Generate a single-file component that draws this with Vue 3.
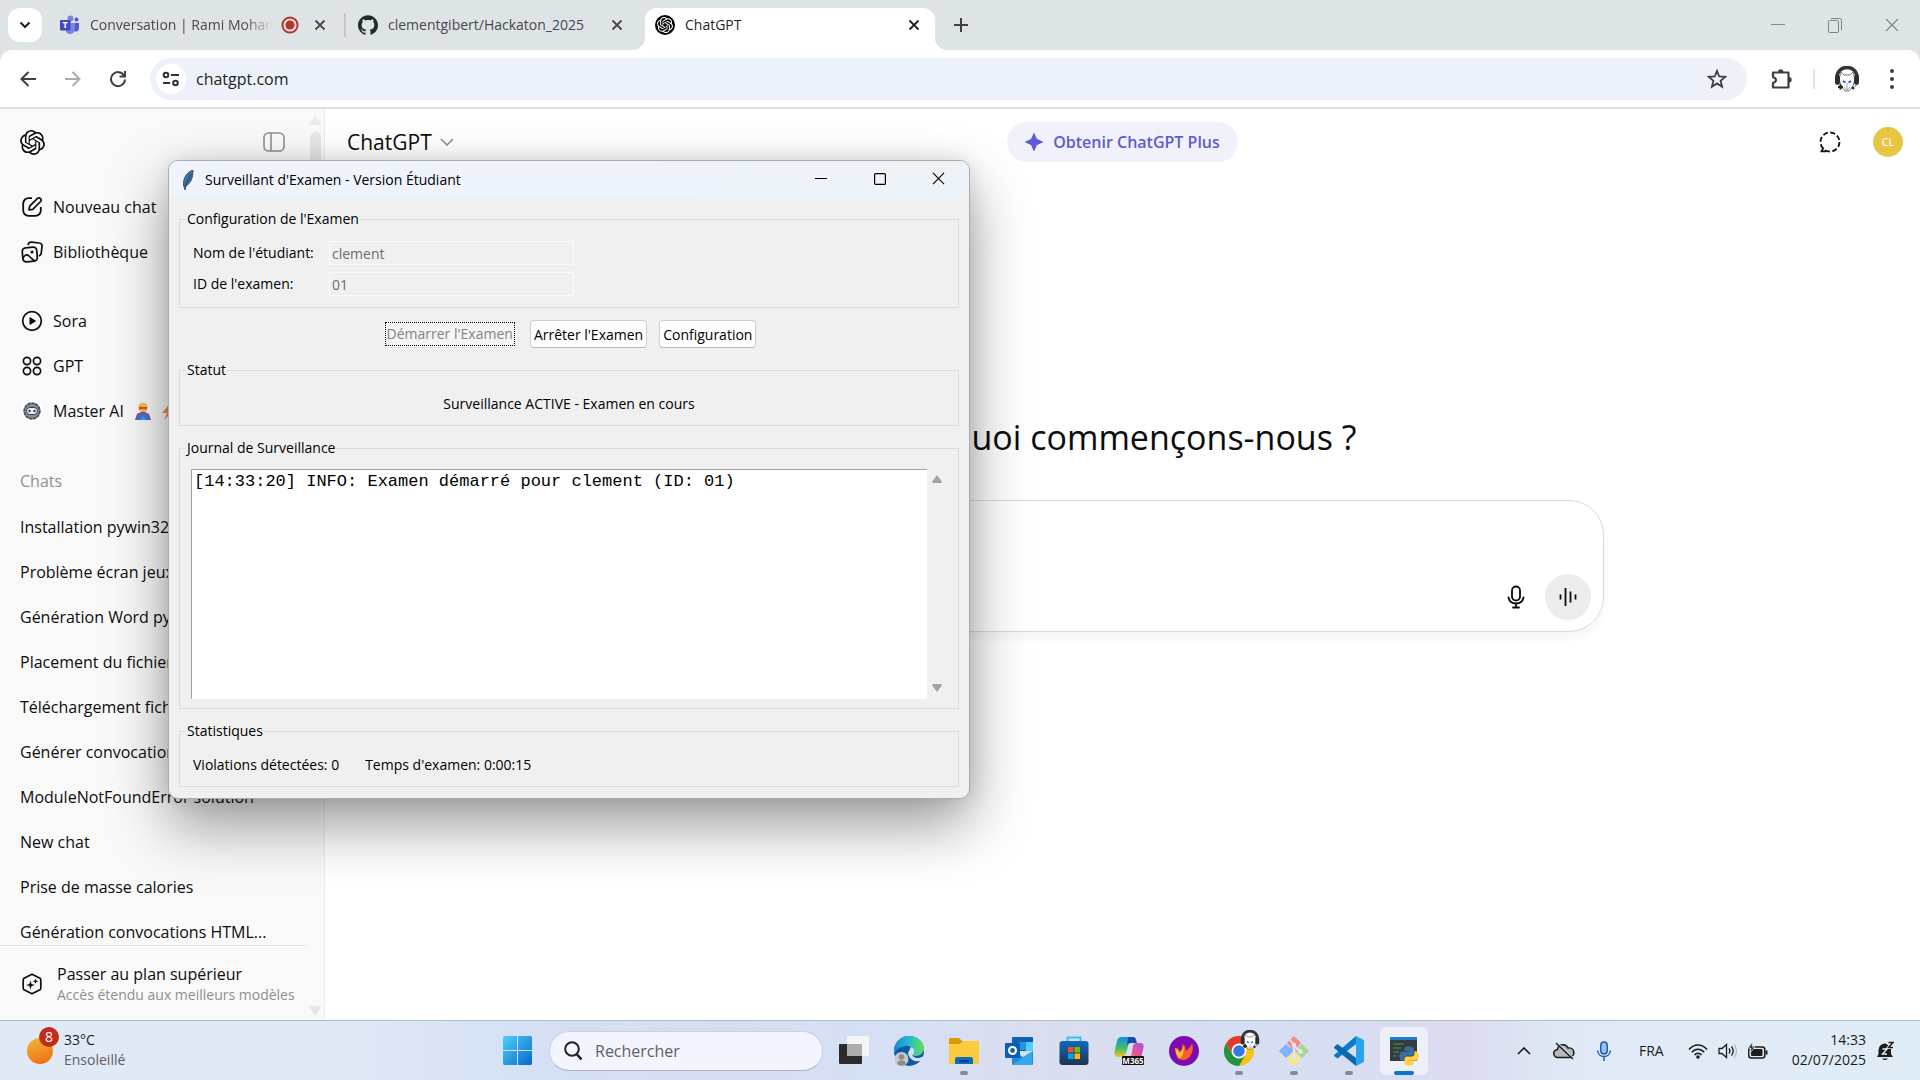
<script setup>
import { ref } from 'vue'

const chats = [
  'Installation pywin32',
  'Problème écran jeux',
  'Génération Word python',
  'Placement du fichier',
  'Téléchargement fichier',
  'Générer convocations',
  'ModuleNotFoundError solution',
  'New chat',
  'Prise de masse calories',
  'Génération convocations HTML...'
]
const student = ref('clement')
const examId = ref('01')
const log = ref('[14:33:20] INFO: Examen démarré pour clement (ID: 01)')
const address = ref('chatgpt.com')
const prompt = ref('')
const search = ref('')
</script>

<template>
  <div class="screen">
    <svg class="defs" aria-hidden="true">
      <defs>
        <symbol id="openai" viewBox="0 0 24 24">
          <path d="M22.2819 9.8211a5.9847 5.9847 0 0 0-.5157-4.9108 6.0462 6.0462 0 0 0-6.5098-2.9A6.0651 6.0651 0 0 0 4.9807 4.1818a5.9847 5.9847 0 0 0-3.9977 2.9 6.0462 6.0462 0 0 0 .7427 7.0966 5.98 5.98 0 0 0 .511 4.9107 6.051 6.051 0 0 0 6.5146 2.9001A5.9847 5.9847 0 0 0 13.2599 24a6.0557 6.0557 0 0 0 5.7718-4.2058 5.9894 5.9894 0 0 0 3.9977-2.9001 6.0557 6.0557 0 0 0-.7475-7.0729zm-9.022 12.6081a4.4755 4.4755 0 0 1-2.8764-1.0408l.1419-.0804 4.7783-2.7582a.7948.7948 0 0 0 .3927-.6813v-6.7369l2.02 1.1686a.071.071 0 0 1 .038.052v5.5826a4.504 4.504 0 0 1-4.4945 4.4944zm-9.6607-4.1254a4.4708 4.4708 0 0 1-.5346-3.0137l.142.0852 4.783 2.7582a.7712.7712 0 0 0 .7806 0l5.8428-3.3685v2.3324a.0804.0804 0 0 1-.0332.0615L9.74 19.9502a4.4992 4.4992 0 0 1-6.1408-1.6464zM2.3408 7.8956a4.485 4.485 0 0 1 2.3655-1.9728V11.6a.7664.7664 0 0 0 .3879.6765l5.8144 3.3543-2.0201 1.1685a.0757.0757 0 0 1-.071 0l-4.8303-2.7865A4.504 4.504 0 0 1 2.3408 7.872zm16.5963 3.8558L13.1038 8.364 15.1192 7.2a.0757.0757 0 0 1 .071 0l4.8303 2.7913a4.4944 4.4944 0 0 1-.6765 8.1042v-5.6772a.79.79 0 0 0-.407-.667zm2.0107-3.0231l-.142-.0852-4.7735-2.7818a.7759.7759 0 0 0-.7854 0L9.409 9.2297V6.8974a.0662.0662 0 0 1 .0284-.0615l4.8303-2.7866a4.4992 4.4992 0 0 1 6.6802 4.66zM8.3065 12.863l-2.02-1.1638a.0804.0804 0 0 1-.038-.0567V6.0742a4.4992 4.4992 0 0 1 7.3757-3.4537l-.142.0805L8.704 5.459a.7948.7948 0 0 0-.3927.6813zm1.0976-2.3654l2.602-1.4998 2.6069 1.4998v2.9994l-2.5974 1.4997-2.6067-1.4997Z" />
        </symbol>
        <symbol id="cross" viewBox="0 0 12 12">
          <path d="M1.5 1.5l9 9M10.5 1.5l-9 9" fill="none" stroke="currentColor" stroke-width="1.8" />
        </symbol>
        <symbol id="thin-cross" viewBox="0 0 14 14">
          <path d="M1 1l12 12M13 1L1 13" fill="none" stroke="currentColor" stroke-width="1.2" />
        </symbol>
        <symbol id="dog" viewBox="0 0 26 26">
          <circle cx="13" cy="13" r="10" fill="#fff" />
          <path d="M3 11a10 9.500 0 0 1 20 0" fill="none" stroke="#333438" stroke-width="3.600" />
          <path d="M7 6l3 3h6l3-3 2 7-2 7-4 5h-4l-4-5-2-7z" fill="#fff" stroke="#666" stroke-width=".9" />
          <rect x="1" y="9" width="5" height="10" rx="2.4" fill="#2d2e31" />
          <rect x="20" y="9" width="5" height="10" rx="2.4" fill="#2d2e31" />
          <path d="M9 15l2.400 1.600M17 15l-2.400 1.600" stroke="#2546c8" stroke-width="1.800" />
          <path d="M13 17v7M10 21l3 3 3-3" fill="none" stroke="#888" stroke-width=".7" />
          <path d="M4 21h5M6.500 18.500v5" stroke="#222" stroke-width="2.200" />
          <circle cx="19" cy="22" r="1.500" fill="#222a80" /><circle cx="21.500" cy="20" r="1" fill="#d19b25" />
        </symbol>
      </defs>
    </svg>

    <header class="tabs">
      <button class="tab-menu" aria-label="Rechercher dans les onglets">
        <svg width="12" height="8" viewBox="0 0 12 8"><path d="M1.500 1.500L6 6l4.500-4.500" fill="none" stroke="#1f1f1f" stroke-width="2" /></svg>
      </button>
      <div class="tab tab-teams">
        <svg width="20" height="20" viewBox="0 0 20 20">
          <circle cx="10.500" cy="3.500" r="3" fill="#7b83eb" /><circle cx="16.500" cy="4.500" r="2" fill="#5059c9" />
          <path d="M13 8h6v5.500a3.200 3.200 0 0 1-5 2.500z" fill="#5059c9" />
          <path d="M6 8h9v6a5 5 0 0 1-9 3z" fill="#7b83eb" />
          <rect y="5" width="10.500" height="10.500" rx="1" fill="#4349b8" />
          <text x="5.200" y="13.400" font-size="9" font-weight="700" text-anchor="middle" fill="#fff">T</text>
        </svg>
        <span class="tab-title fade">Conversation | Rami Moham</span>
        <svg class="rec" width="18" height="18" viewBox="0 0 18 18"><circle cx="9" cy="9" r="7.600" fill="none" stroke="#b3352c" stroke-width="2" /><circle cx="9" cy="9" r="4.500" fill="#b3352c" /></svg>
        <button class="x" aria-label="Fermer"><svg width="12" height="12"><use href="#cross" /></svg></button>
      </div>
      <i class="tab-sep"></i>
      <div class="tab tab-git">
        <svg width="20" height="20" viewBox="0 0 24 24" fill="#24292f"><path d="M12 .297c-6.63 0-12 5.373-12 12 0 5.303 3.438 9.8 8.205 11.385.6.113.82-.258.82-.577 0-.285-.01-1.04-.015-2.04-3.338.724-4.042-1.61-4.042-1.61C4.422 18.07 3.633 17.7 3.633 17.7c-1.087-.744.084-.729.084-.729 1.205.084 1.838 1.236 1.838 1.236 1.07 1.835 2.809 1.305 3.495.998.108-.776.417-1.305.76-1.605-2.665-.3-5.466-1.332-5.466-5.93 0-1.31.465-2.38 1.235-3.22-.135-.303-.54-1.523.105-3.176 0 0 1.005-.322 3.3 1.23.96-.267 1.98-.399 3-.405 1.02.006 2.04.138 3 .405 2.28-1.552 3.285-1.23 3.285-1.23.645 1.653.24 2.873.12 3.176.765.84 1.23 1.91 1.23 3.22 0 4.61-2.805 5.625-5.475 5.92.42.36.81 1.096.81 2.22 0 1.606-.015 2.896-.015 3.286 0 .315.21.69.825.57C20.565 22.092 24 17.592 24 12.297c0-6.627-5.373-12-12-12" /></svg>
        <span class="tab-title">clementgibert/Hackaton_2025</span>
        <button class="x" aria-label="Fermer"><svg width="12" height="12"><use href="#cross" /></svg></button>
      </div>
      <div class="tab tab-active">
        <span class="favicon"><svg width="16" height="16" fill="#fff"><use href="#openai" /></svg></span>
        <span class="tab-title">ChatGPT</span>
        <button class="x" aria-label="Fermer"><svg width="12" height="12"><use href="#cross" /></svg></button>
      </div>
      <button class="new-tab" aria-label="Nouvel onglet">
        <svg width="14" height="14" viewBox="0 0 14 14"><path d="M7 0v14M0 7h14" stroke="#3c4043" stroke-width="2" /></svg>
      </button>
      <div class="win-controls">
        <button aria-label="Réduire"><svg width="14" height="14" viewBox="0 0 14 14"><path d="M0 6.500h14" stroke="#83898d" /></svg></button>
        <button aria-label="Restaurer"><svg width="14" height="16" viewBox="0 0 14 16"><path d="M3 1.500h8.500a2 2 0 0 1 2 2V13" fill="none" stroke="#7b8084" /><rect x=".5" y="3.500" width="10" height="12" rx="1" fill="none" stroke="#7b8084" /></svg></button>
        <button aria-label="Fermer"><svg width="14" height="14"><use href="#thin-cross" /></svg></button>
      </div>
    </header>

    <div class="toolbar">
      <button class="tool" aria-label="Retour"><svg width="16" height="16" viewBox="0 0 16 16"><path d="M8.500 1L1.500 8l7 7M1.500 8H16" fill="none" stroke="#3c4043" stroke-width="2" /></svg></button>
      <button class="tool" aria-label="Suivant"><svg width="16" height="16" viewBox="0 0 16 16"><path d="M7.500 1l7 7-7 7M14.500 8H0" fill="none" stroke="#a9abad" stroke-width="2" /></svg></button>
      <button class="tool" aria-label="Actualiser"><svg width="18" height="18" viewBox="0 0 18 18"><path d="M15 5.500A7 7 0 1 0 16 9.500M16 1v5.500h-5.500" fill="none" stroke="#3c4043" stroke-width="2" /></svg></button>
      <div class="omnibox">
        <button class="site" aria-label="Informations du site"><svg width="18" height="16" viewBox="0 0 18 16"><g fill="none" stroke="#303134" stroke-width="2"><circle cx="4" cy="4" r="2.300" /><path d="M9 4h8M1 12h7" /><circle cx="13.500" cy="12" r="2.300" /></g></svg></button>
        <input v-model="address" aria-label="Adresse" />
        <button class="star" aria-label="Ajouter aux favoris"><svg width="20" height="20" viewBox="0 0 20 20"><path d="M10 1.800l2.200 5.700 6 .4-4.600 3.900 1.500 5.900L10 14.400l-5.100 3.300 1.500-5.900L1.800 7.900l6-.4z" fill="none" stroke="#3c4043" stroke-width="1.800" /></svg></button>
      </div>
      <button class="puzzle" aria-label="Extensions"><svg width="22" height="22" viewBox="0 0 22 22"><path d="M2 4.500h15.500v15H2v-4.500c4-1.500 4-4.500 0-6z" fill="none" stroke="#3c4043" stroke-width="2.200" stroke-linejoin="round" /><path d="M7 4a2.700 2.700 0 0 1 5.400 0zM18 9a2.700 2.700 0 0 1 0 5.400z" fill="#3c4043" /></svg></button>
      <i class="tool-sep"></i>
      <button class="profile" aria-label="Profil"><svg width="26" height="26"><use href="#dog" /></svg></button>
      <button class="dots" aria-label="Menu"><svg width="4" height="20" viewBox="0 0 4 20" fill="#3c4043"><circle cx="2" cy="2" r="2" /><circle cx="2" cy="10" r="2" /><circle cx="2" cy="18" r="2" /></svg></button>
    </div>

    <div class="page">
      <aside class="sidebar">
        <div class="side-main">
          <div class="side-head">
            <svg width="25" height="25" fill="#0d0d0d"><use href="#openai" /></svg>
            <button aria-label="Fermer la barre latérale"><svg width="22" height="20" viewBox="0 0 22 20"><rect x="1" y="1" width="20" height="18" rx="4.500" fill="none" stroke="#8f8f8f" stroke-width="1.600" /><path d="M8 1v18" stroke="#8f8f8f" stroke-width="1.600" /></svg></button>
          </div>
          <nav>
            <a href="#"><svg width="22" height="22" viewBox="0 0 22 22"><path d="M11 2.200H7.500A5.300 5.300 0 0 0 2.200 7.500v7a5.300 5.300 0 0 0 5.300 5.300h7a5.300 5.300 0 0 0 5.300-5.300V11" fill="none" stroke="#0d0d0d" stroke-width="1.800" /><path d="M8 14l.7-3.800 7.800-7.800a2.200 2.200 0 0 1 3.100 3.100l-7.800 7.800z" fill="none" stroke="#0d0d0d" stroke-width="1.700" stroke-linejoin="round" /></svg>Nouveau chat</a>
            <a href="#"><svg width="22" height="22" viewBox="0 0 22 22"><g fill="none" stroke="#0d0d0d" stroke-width="1.700" stroke-linejoin="round"><path d="M7 4c.4-2 1.300-3 3.500-2.800l7.500.8c2.200.2 3.200 1.400 3 3.300l-.8 7c-.2 1.500-1 2.300-2.400 2.500" /><rect x="1.500" y="6.500" width="14.500" height="14" rx="3.500" transform="rotate(-5 9 13)" /><path d="M2 17c2-3.500 4-4 6-2s4 3.500 5.500 5" /></g><circle cx="11" cy="11" r="1.500" fill="#0d0d0d" /></svg>Bibliothèque</a>
          </nav>
          <nav>
            <a href="#"><svg width="22" height="22" viewBox="0 0 22 22"><circle cx="11" cy="11" r="9.300" fill="none" stroke="#0d0d0d" stroke-width="1.700" /><path d="M8.500 8v6c0 .8.600 1 1.200.6l4.800-3c.5-.4.500-.8 0-1.200l-4.800-3c-.6-.4-1.200-.2-1.200.6z" fill="#0d0d0d" /></svg>Sora</a>
            <a href="#"><svg width="22" height="22" viewBox="0 0 22 22"><g fill="none" stroke="#0d0d0d" stroke-width="1.700"><circle cx="6" cy="6" r="3.600" /><circle cx="16" cy="6" r="3.600" /><circle cx="6" cy="16" r="3.600" /><circle cx="16" cy="16" r="3.600" /></g></svg>GPT</a>
            <a href="#"><svg width="22" height="22" viewBox="0 0 22 22"><circle cx="11" cy="11" r="11" fill="#fff" /><circle cx="11" cy="11" r="8.500" fill="#7d8fa0" /><circle cx="11" cy="11" r="7.800" fill="none" stroke="#3e4b58" stroke-width="1.600" stroke-dasharray="3 1" /><rect x="5.500" y="7.500" width="11" height="7" rx="3.400" fill="#eef2f5" stroke="#2c3b49" /><circle cx="8.500" cy="11" r="1.200" fill="#26323e" /><circle cx="13.500" cy="11" r="1.200" fill="#26323e" /></svg><span>Master AI</span>
              <svg class="hero" width="18" height="18" viewBox="0 0 18 18"><path d="M1 18l2-6 4-2h4l4 2 2 6z" fill="#c9364e" /><path d="M2 18c0-5 3-7 7-7s7 2 7 7z" fill="#3f74d8" /><path d="M9 14l3 4H6z" fill="#4f9be8" /><circle cx="9" cy="5.500" r="4.500" fill="#f6b73c" /><path d="M4.500 5a4.500 4.500 0 0 1 9 0l-2-1.500H7z" fill="#f3c84f" /><path d="M5 5h8v2.400l-4-.7-4 .7z" fill="#dc4a4d" /></svg>
              <svg class="bolt" width="14" height="18" viewBox="0 0 14 18"><path d="M9 0L0 11h5l-3 7L13 7H8l4-7z" fill="#ef8a50" /></svg></a>
          </nav>
          <h2>Chats</h2>
          <nav class="chats"><a v-for="c in chats" :key="c" href="#">{{ c }}</a></nav>
          <a class="upgrade" href="#">
            <svg width="22" height="22" viewBox="0 0 22 22"><path d="M11 1.200l8 4a1.500 1.500 0 0 1 .8 1.400v8.800a1.500 1.500 0 0 1-.8 1.400l-8 4-8-4a1.500 1.500 0 0 1-.8-1.400V6.600A1.500 1.500 0 0 1 3 5.200z" fill="none" stroke="#0d0d0d" stroke-width="1.700" stroke-linejoin="round" /><path d="M9.500 7.500l1.100 3.400 3.400 1.100-3.400 1.100-1.100 3.400-1.100-3.400L5 12l3.400-1.100zM14.500 5.500l.7 2.100 2.100.7-2.100.7-.7 2.100-.7-2.100-2.100-.7 2.100-.7z" fill="#0d0d0d" /></svg>
            <span class="upgrade-text"><b>Passer au plan supérieur</b><small>Accès étendu aux meilleurs modèles</small></span>
          </a>
        </div>
        <div class="side-scroll">
          <svg width="12" height="10" viewBox="0 0 12 10"><path d="M6 0l6 9q0 1-1 1H1q-1 0-1-1z" fill="#ececec" /></svg>
          <i></i>
          <svg width="12" height="10" viewBox="0 0 12 10"><path d="M6 10L0 1q0-1 1-1h10q1 0 1 1z" fill="#e6e6e6" /></svg>
        </div>
      </aside>

      <main class="main">
        <div class="main-head">
          <button class="model">ChatGPT<svg width="14" height="8" viewBox="0 0 14 8"><path d="M1 1l6 6 6-6" fill="none" stroke="#8f8f8f" stroke-width="1.600" /></svg></button>
          <button class="plus"><svg width="18" height="18" viewBox="0 0 18 18"><path d="M9 .5l2.500 5.700L17.500 9l-6 2.800L9 17.500l-2.500-5.700L.5 9l6-2.800z" fill="#5d5bd0" stroke="#5d5bd0" stroke-linejoin="round" /></svg>Obtenir ChatGPT Plus</button>
          <div class="account">
            <button aria-label="Chat temporaire"><svg width="22" height="22" viewBox="0 0 22 22"><circle cx="11" cy="11" r="9.500" fill="none" stroke="#0d0d0d" stroke-width="1.800" stroke-dasharray="5 2.460" /><path d="M1.500 20.300h6M4.500 17l-2 3" stroke="#0d0d0d" stroke-width="1.700" /></svg></button>
            <button class="avatar">CL</button>
          </div>
        </div>
        <h1>Par quoi commençons-nous ?</h1>
        <div class="composer">
          <textarea v-model="prompt" aria-label="Message"></textarea>
          <div class="composer-actions">
            <button aria-label="Dicter"><svg width="18" height="24" viewBox="0 0 18 24"><g fill="none" stroke="#0d0d0d" stroke-width="1.800" stroke-linecap="round"><rect x="5" y="1.500" width="8" height="14" rx="4" /><path d="M1.500 12.500c.8 3.800 3.500 6 7.500 6s6.700-2.200 7.500-6M9 18.500v3.500M6 22.500h6" /></g></svg></button>
            <button class="voice" aria-label="Mode vocal"><svg width="18" height="18" viewBox="0 0 18 18"><path d="M1.500 6.500v5M6.500 0v18M11.500 3.500v11M16.500 6.500v5" stroke="#0d0d0d" stroke-width="1.800" /></svg></button>
          </div>
        </div>
      </main>
    </div>

    <footer class="taskbar">
      <button class="weather">
        <span class="sun"><b>8</b></span>
        <span class="weather-text"><span>33°C</span><small>Ensoleillé</small></span>
      </button>
      <div class="dock">
        <button class="app" aria-label="Démarrer"><svg width="30" height="30" viewBox="0 0 30 30"><defs><linearGradient id="win" x1="0" y1="0" x2="1" y2="1"><stop offset="0" stop-color="#4fd0fb" /><stop offset="1" stop-color="#0569c9" /></linearGradient></defs><path d="M1 0h13v14H0V1zM15 0h13l1 1v13H15zM0 15h14v14H1l-1-1zM15 15h14v13l-1 1H15z" fill="url(#win)" /></svg></button>
        <label class="search">
          <svg width="18" height="20" viewBox="0 0 18 20"><circle cx="8" cy="8" r="6.800" fill="none" stroke="#222" stroke-width="2" /><path d="M12.500 13l5 5.500" stroke="#222" stroke-width="2.600" /></svg>
          <input v-model="search" placeholder="Rechercher" aria-label="Rechercher" />
        </label>
        <button class="app" aria-label="Vue des tâches"><svg width="30" height="30" viewBox="0 0 30 30"><rect y="8" width="23" height="20" rx="1" fill="#2b2b2b" /><rect x="8" y="0" width="22" height="20" rx="1" fill="#f5f5f5" /><rect x="8" y="8" width="15" height="12" fill="#adadad" /></svg></button>
        <button class="app" aria-label="Edge"><svg width="30" height="30" viewBox="0 0 30 30"><defs><linearGradient id="e1"><stop offset="0" stop-color="#1689d8" /><stop offset=".5" stop-color="#26b9cf" /><stop offset="1" stop-color="#66e04f" /></linearGradient></defs><circle cx="15" cy="15" r="15" fill="#0e59a4" /><path d="M0 14C1 5 8 0 15 0c9 0 15 6 15 12 0 5-4 8-8 8-3 0-5-1-4-3 2-4-1-7-5-7C8 10 3 12 0 18z" fill="url(#e1)" /><path d="M17 11c4 2 4 5 2 7s2 4 5 4 5-2 6-2v4c-2 0-5 2-9 1s-7-5-7-8z" fill="#d6e0f4" /><circle cx="7.500" cy="23" r="7" fill="#c8c8c8" /><circle cx="7.500" cy="21" r="2.800" fill="#8a8a8a" /><path d="M3 28c1-5 8-5 9 0a7 7 0 0 1-9 0z" fill="#8a8a8a" /></svg></button>
        <button class="app run" aria-label="Explorateur"><svg width="30" height="28" viewBox="0 0 30 28"><path d="M0 2q0-1 1-1h9l3 3h15q1 0 1 1v8H0z" fill="#d99a06" /><path d="M0 7h11l3-3h15q1 0 1 1v21q0 1-1 1H0z" fill="#fecb3d" /><path d="M6 27v-5q0-2 2-2h14q2 0 2 2v5z" fill="#0f6cbd" /><rect x="10" y="23" width="10" height="2" rx="1" fill="#0a3f78" /></svg></button>
        <button class="app" aria-label="Outlook"><svg width="30" height="30" viewBox="0 0 30 30"><path d="M8 2q0-1 1-1h19q1 0 1 1v13H8z" fill="#0f62ae" /><path d="M15 6h7v8h-7z" fill="#2394e0" /><path d="M22 6h7v9h-7z" fill="#50d0ff" /><path d="M8 14l11 7 10-6v13q0 1-1 1H9q-1 0-1-1z" fill="#1f8fdd" /><path d="M8 29l20-13v12q0 1-1 1z" fill="#38a7ec" /><rect x="1" y="7" width="15" height="15" rx="1" fill="#0a5fb4" /><circle cx="8.500" cy="14.500" r="3.500" fill="none" stroke="#fff" stroke-width="2.200" /></svg></button>
        <button class="app" aria-label="Microsoft Store"><svg width="30" height="30" viewBox="0 0 30 30"><defs><linearGradient id="st" x1="0" y1="0" x2="0" y2="1"><stop offset="0" stop-color="#0b6cbb" /><stop offset="1" stop-color="#223253" /></linearGradient></defs><path d="M8.500 6V1.500h13V6" fill="none" stroke="#36c1f4" stroke-width="2" /><rect x=".5" y="5" width="29" height="24" rx="3" fill="url(#st)" /><path d="M9 11h5.500v5.500H9z" fill="#f25022" /><path d="M15.500 11H21v5.500h-5.500z" fill="#7fba00" /><path d="M9 17.500h5.500V23H9z" fill="#00a4ef" /><path d="M15.500 17.500H21V23h-5.500z" fill="#ffb900" /></svg></button>
        <button class="app" aria-label="Microsoft 365"><svg width="30" height="30" viewBox="0 0 30 30"><defs><linearGradient id="m1" x1="0" y1="0" x2="0" y2="1"><stop offset="0" stop-color="#138fd9" /><stop offset=".55" stop-color="#43ba6a" /><stop offset="1" stop-color="#f2c626" /></linearGradient><linearGradient id="m2" x1="1" y1="0" x2="0" y2="1"><stop offset="0" stop-color="#a450e8" /><stop offset=".5" stop-color="#e85299" /><stop offset="1" stop-color="#ffa04b" /></linearGradient></defs><path d="M8 1h11c-3 1-4 5-5 9s-2 11-6 11H4c-4 0-4-4-3-8l2-8c1-3 2-4 5-4z" fill="url(#m1)" /><path d="M14 1h5c3 0 3 3 4 6h-6c-2 0-3 1-4 3z" fill="#174cae" /><path d="M19 10c1-3 2-3 5-3h3c3 0 3 3 2 7l-2 8c-1 3-2 5-6 5h-8c3-1 4-5 6-17z" fill="url(#m2)" /><rect x="8" y="20" width="22" height="9" rx="1" fill="#101010" /><text x="19" y="27.500" font-size="8" font-weight="700" text-anchor="middle" fill="#fff">M365</text></svg></button>
        <button class="app" aria-label="Flamme"><svg width="30" height="30" viewBox="0 0 30 30"><circle cx="15" cy="15" r="15" fill="#7d0bb0" /><g transform="translate(3 3) scale(.8)"><path d="M8 24C4 18 6 13 6 11c2 1 3 3 3 5 3-2 5-5 4-10 3 2 5 5 4 9 2-2 6-4 8-9 3 8-1 17-8 20-3 1-6 0-9-2z" fill="#ff5c2c" /><path d="M8 24C4 18 4 13 4 11c2 1 4 3 5 5l1 1c2-1 4-5 3-9 3 3 2 9-2 16-1 0-2 0-3 0z" fill="#ffc02e" /></g></svg></button>
        <button class="app run" aria-label="Chrome"><svg width="30" height="30" viewBox="0 0 30 30"><circle cx="15" cy="15" r="15" fill="#fbc016" /><path d="M2 7.500A15 15 0 0 1 28 7.500H15L8.500 18.700z" fill="#e33b2e" /><path d="M2 7.500A15 15 0 0 0 15 30l6.500-11.200h-13z" fill="#229342" /><circle cx="15" cy="15" r="7.500" fill="#fff" /><circle cx="15" cy="15" r="5.800" fill="#3478e5" /></svg><svg class="badge-dog" width="20" height="20"><use href="#dog" /></svg></button>
        <button class="app run" aria-label="Git"><svg width="30" height="30" viewBox="0 0 30 30"><path d="M15 0l7 7-7 8-7-8z" fill="#f88a83" /><path d="M7 8l8 7-8 7-7-7z" fill="#80b2ff" /><path d="M23 8l7 7-7 7-8-7z" fill="#a9d68d" /><path d="M15 15l7 8-7 7-7-7z" fill="#fde57e" /><path d="M11 4l4 5v13M15 10l6 5" fill="none" stroke="#e3e6f2" stroke-width="2" /><circle cx="15" cy="9" r="2.200" fill="#e3e6f2" /><circle cx="15" cy="22" r="2.400" fill="#e3e6f2" /><circle cx="21.500" cy="15.500" r="2.400" fill="#e3e6f2" /></svg></button>
        <button class="app run" aria-label="Visual Studio Code"><svg width="30" height="30" viewBox="0 0 30 30"><path d="M22 8L3.500 22.500 0 20v-1L22 0z" fill="#0a7cc9" /><path d="M0 11l3.500-3L22 22v8L0 12z" fill="#0a68ab" /><path d="M22 0l7 3.500q1 .5 1 1.500v20q0 1-1 1.500L22 30z" fill="#27a3ef" /></svg></button>
        <button class="app run active" aria-label="Python"><svg width="30" height="30" viewBox="0 0 30 30"><rect x="1" y="1" width="27" height="24" fill="#343c40" /><rect x="1" y="1" width="27" height="3" fill="#1a7fc9" /><path d="M4 8h11M4 12h8M4 16h6M4 20h4" stroke="#3e7c42" stroke-width="1.500" /><g transform="translate(10.500 10.500) scale(.8)"><path fill="#386f9f" d="M14.25.18l.9.2.73.26.59.3.45.32.34.34.25.34.16.33.1.3.04.26.02.2-.01.13V8.500l-.05.63-.13.55-.21.46-.26.38-.3.31-.33.25-.35.19-.35.14-.33.1-.3.07-.26.04-.21.02H8.770l-.69.05-.59.14-.5.22-.41.27-.33.32-.27.35-.2.36-.15.37-.1.35-.07.32-.04.27-.02.21v3.060H3.170l-.21-.03-.28-.07-.32-.12-.35-.18-.36-.26-.36-.36-.35-.46-.32-.59-.28-.73-.21-.88-.14-1.050-.05-1.230.06-1.220.16-1.040.24-.87.32-.71.36-.57.4-.44.42-.33.42-.24.4-.16.36-.1.32-.05.24-.01h.16l.06.01h8.160v-.83H6.180l-.01-2.750-.02-.37.05-.34.11-.31.17-.28.25-.26.31-.23.38-.2.44-.18.51-.15.58-.12.64-.1.71-.06.77-.04.84-.02 1.270.05z" /><path transform="rotate(180 12 12)" fill="#fbd244" d="M14.25.18l.9.2.73.26.59.3.45.32.34.34.25.34.16.33.1.3.04.26.02.2-.01.13V8.500l-.05.63-.13.55-.21.46-.26.38-.3.31-.33.25-.35.19-.35.14-.33.1-.3.07-.26.04-.21.02H8.770l-.69.05-.59.14-.5.22-.41.27-.33.32-.27.35-.2.36-.15.37-.1.35-.07.32-.04.27-.02.21v3.060H3.170l-.21-.03-.28-.07-.32-.12-.35-.18-.36-.26-.36-.36-.35-.46-.32-.59-.28-.73-.21-.88-.14-1.050-.05-1.230.06-1.220.16-1.040.24-.87.32-.71.36-.57.4-.44.42-.33.42-.24.4-.16.36-.1.32-.05.24-.01h.16l.06.01h8.160v-.83H6.180l-.01-2.750-.02-.37.05-.34.11-.31.17-.28.25-.26.31-.23.38-.2.44-.18.51-.15.58-.12.64-.1.71-.06.77-.04.84-.02 1.270.05z" /></g></svg></button>
      </div>
      <div class="tray">
        <button aria-label="Icônes cachées"><svg width="14" height="8" viewBox="0 0 14 8"><path d="M1 7l6-6 6 6" fill="none" stroke="#1b1b1b" stroke-width="1.600" /></svg></button>
        <button aria-label="OneDrive"><svg width="22" height="18" viewBox="0 0 22 18"><path d="M5 15.500a4 4 0 0 1-.5-8A5.500 5.500 0 0 1 15 6a4.800 4.800 0 0 1 2 9.500z" fill="#b5b9bd" stroke="#1b1b1b" stroke-width="1.500" /><path d="M4.300 1l17 16" stroke="#e1ecf6" stroke-width="1.500" /><path d="M3 1l17 16" stroke="#1b1b1b" stroke-width="1.500" /></svg></button>
        <button aria-label="Microphone"><svg width="14" height="20" viewBox="0 0 14 20"><g fill="none" stroke="#1d5bb5" stroke-width="1.500"><rect x="3.800" y="1" width="6.400" height="12" rx="3.200" fill="#9cc2ea" /><path d="M.8 9.500c0 8 12.400 8 12.400 0M7 15.500V20" /></g></svg></button>
        <button class="lang">FRA</button>
        <button class="sys" aria-label="Réseau, son, batterie">
          <svg width="20" height="16" viewBox="0 0 20 16"><g fill="none" stroke="#1b1b1b" stroke-width="1.500"><path d="M1 6.500c5-6 13-6 18 0M3.800 9.300c3.500-4.200 8.900-4.200 12.400 0M6.500 12c2-2.400 5-2.400 7 0" /></g><circle cx="10" cy="14" r="1.800" fill="#1b1b1b" /></svg>
          <svg width="20" height="16" viewBox="0 0 20 16"><path d="M1 5.500h3L8.500 1.500v13L4 10.500H1z" fill="none" stroke="#1b1b1b" stroke-width="1.300" /><path d="M11 5.500q2 2.500 0 5M13.500 3.500q3.500 4.500 0 9" fill="none" stroke="#1b1b1b" stroke-width="1.300" /><path d="M16 1.500q5 6.500 0 13" fill="none" stroke="#b2bac1" stroke-width="1.300" /></svg>
          <svg width="20" height="18" viewBox="0 0 20 18"><rect x=".8" y="5" width="16" height="11" rx="2.500" fill="none" stroke="#1b1b1b" stroke-width="1.500" /><rect x="3" y="7" width="11.500" height="7" rx="1" fill="#1b1b1b" /><path d="M17.500 8.500h2v4h-2z" fill="#1b1b1b" /><path d="M4.500 0L0 6h3l-1 5 5-6H4z" fill="#1b1b1b" stroke="#e1ecf6" stroke-width=".8" /></svg>
        </button>
        <button class="clock"><span>14:33</span><span>02/07/2025</span></button>
        <button aria-label="Notifications"><svg width="18" height="20" viewBox="0 0 18 20"><path d="M2.500 9a6.500 6.500 0 0 1 7-6.500L15 6v7l2 3H1l1.500-3zM6 17.500h6q-3 3-6 0z" fill="#1b1b1b" /><path d="M12.500 1.500H17L12.500 6.500H17" fill="none" stroke="#e1ecf6" stroke-width="3" /><path d="M12.500 1.500H17L12.500 6.500H17" fill="none" stroke="#1b1b1b" stroke-width="1.400" /><path d="M6.500 8h4.500L6.500 13h4.500" fill="none" stroke="#e1ecf6" stroke-width="1.400" /></svg></button>
      </div>
    </footer>

    <section class="exam">
      <header class="exam-bar">
        <svg width="12" height="20" viewBox="0 0 12 20"><path d="M11 0C5 2 1 8 1.500 15L3 20l1-4c5-3 7-8 7-16z" fill="#3b6ea8" stroke="#4a525b" /><path d="M9 4L3 17" stroke="#2c3f57" /></svg>
        <h3>Surveillant d'Examen - Version Étudiant</h3>
        <button aria-label="Réduire"><svg width="12" height="12" viewBox="0 0 12 12"><path d="M0 5.500h12" stroke="#000" /></svg></button>
        <button aria-label="Agrandir"><svg width="12" height="12" viewBox="0 0 12 12"><rect x=".6" y=".6" width="10.800" height="10.800" rx="1" fill="none" stroke="#000" stroke-width="1.200" /></svg></button>
        <button aria-label="Fermer"><svg width="13" height="13"><use href="#thin-cross" /></svg></button>
      </header>
      <div class="exam-body">
        <fieldset class="config">
          <legend>Configuration de l'Examen</legend>
          <label for="student">Nom de l'étudiant:</label><input id="student" v-model="student" disabled />
          <label for="exam-id">ID de l'examen:</label><input id="exam-id" v-model="examId" disabled />
        </fieldset>
        <div class="actions">
          <button class="off" disabled><span>Démarrer l'Examen</span></button>
          <button>Arrêter l'Examen</button>
          <button>Configuration</button>
        </div>
        <fieldset class="status">
          <legend>Statut</legend>
          <p>Surveillance ACTIVE - Examen en cours</p>
        </fieldset>
        <fieldset class="journal">
          <legend>Journal de Surveillance</legend>
          <textarea v-model="log" readonly aria-label="Journal de Surveillance"></textarea>
          <div class="log-scroll">
            <svg width="10" height="8" viewBox="0 0 10 8"><path d="M5 0l4.800 6.500Q10 8 9 8H1Q0 8 .2 6.500z" fill="#a3a3a3" /></svg>
            <svg width="10" height="8" viewBox="0 0 10 8"><path d="M5 8L.2 1.500Q0 0 1 0h8q1 0 .8 1.500z" fill="#a3a3a3" /></svg>
          </div>
        </fieldset>
        <fieldset class="stats">
          <legend>Statistiques</legend>
          <p>Violations détectées: 0</p>
          <p>Temps d'examen: 0:00:15</p>
        </fieldset>
      </div>
    </section>
  </div>
</template>

<style>
body { margin: 0; }
</style>

<style scoped>
.screen { position: relative; display: flex; flex-direction: column; height: 100vh; overflow: hidden; background: #fff; color: #0d0d0d; font: 14px/20px "Open Sans", "Noto Sans", sans-serif; }
.screen * { box-sizing: border-box; }
.defs { position: absolute; width: 0; height: 0; }
svg { flex: none; display: block; }
button { display: flex; align-items: center; justify-content: center; flex: none; padding: 0; border: 0; background: none; color: inherit; font: inherit; white-space: nowrap; }
input, textarea { padding: 0; border: 0; outline: 0; background: none; color: inherit; font: inherit; resize: none; }
a { color: inherit; text-decoration: none; }
h1, h2, h3, p { margin: 0; font-weight: 400; }

.tabs { position: relative; z-index: 1; display: flex; align-items: center; flex: none; height: 50px; padding-left: 8px; background: #dee3e6; color: #45494d; }
.tab-menu { width: 34px; height: 34px; border-radius: 12px; background: #fff; }
.tab { display: flex; align-items: center; height: 42px; }
.tab-title { flex: 1; min-width: 0; white-space: nowrap; }
.tab > svg:first-child { margin-right: 10px; }
.tab-teams { width: 284px; margin-left: 18px; }
.fade { -webkit-mask-image: linear-gradient(90deg, #000 84%, transparent); mask-image: linear-gradient(90deg, #000 84%, transparent); }
.rec { margin: 0 11px 0 8px; }
.x { width: 20px; height: 20px; }
.tab-teams .x { margin-right: 14px; }
.tab-sep { width: 2px; height: 24px; margin-right: 12px; background: #c5c7c9; }
.tab-git { width: 287px; padding-right: 18px; }
.tab-active { position: relative; align-self: flex-end; width: 290px; padding: 0 11px 8px 10px; border-radius: 12px 12px 0 0; background: #fff; color: #1f1f1f; }
.tab-active::before, .tab-active::after { content: ""; position: absolute; bottom: 0; width: 12px; height: 12px; }
.tab-active::before { right: 100%; background: radial-gradient(circle at 0 0, transparent 12px, #fff 12px); }
.tab-active::after { left: 100%; background: radial-gradient(circle at 100% 0, transparent 12px, #fff 12px); }
.favicon { display: flex; align-items: center; justify-content: center; width: 20px; height: 20px; margin-right: 10px; border-radius: 50%; background: #000; }
.new-tab { width: 28px; height: 28px; margin-left: 12px; }
.win-controls { display: flex; margin-left: auto; color: #83898d; }
.win-controls button { width: 57px; height: 48px; }

.toolbar { position: relative; z-index: 0; display: flex; align-items: center; flex: none; height: 59px; padding: 0 20px 0 5px; border-bottom: 2px solid #dfe0e1; border-radius: 12px 12px 0 0; background: #fff; box-shadow: 0 -12px 0 #dee3e6; }
.tool { width: 45px; height: 42px; }
.omnibox { display: flex; align-items: center; flex: 1; height: 42px; margin-left: 10px; padding: 0 20px 0 6px; border-radius: 21px; background: #edf2fa; }
.site { width: 30px; height: 30px; border-radius: 50%; background: #fff; }
.omnibox input { flex: 1; height: 24px; margin-left: 10px; font-size: 16px; color: #1f1f1f; }
.puzzle { margin-left: 24px; }
.tool-sep { width: 2px; height: 20px; margin: 0 19px 0 20px; background: #d3e1fb; }
.dots { width: 4px; margin: 0 6px 0 30px; }

.page { display: flex; flex: 1; min-height: 0; }
.sidebar { display: flex; flex: none; width: 325px; border-right: 1px solid #ebebeb; background: #f9f9f9; font-size: 16px; }
.side-main { display: flex; flex-direction: column; width: 306px; }
.side-head { display: flex; align-items: center; justify-content: space-between; flex: none; height: 66px; margin-bottom: 9px; padding: 0 21px 0 20px; }
nav { display: flex; flex-direction: column; flex: none; margin-bottom: 24px; }
nav a { display: flex; align-items: center; height: 45px; padding-left: 21px; gap: 10px; white-space: nowrap; flex: none; }
.sidebar h2 { flex: none; height: 47px; padding-left: 20px; font-size: 16px; line-height: 48px; color: #8f8f8f; }
.chats { flex: 1; min-height: 0; margin: 0; overflow: hidden; }
.chats a { padding-left: 20px; }
.upgrade { display: flex; align-items: center; flex: none; height: 75px; padding: 1px 0 0 21px; gap: 14px; border-top: 1px solid #e6e6e6; }
.upgrade-text { display: flex; flex-direction: column; white-space: nowrap; }
.upgrade-text b { font-weight: 400; line-height: 22px; }
.upgrade-text small { font-size: 14px; line-height: 20px; color: #8f8f8f; }
.side-scroll { display: flex; flex-direction: column; align-items: center; flex: 1; padding: 6px 0 4px; }
.side-scroll i { width: 11px; height: 400px; margin: 7px 0 auto; border-radius: 6px; background: #e6e6e6; }

.main { display: flex; flex-direction: column; align-items: center; flex: 1; min-width: 0; }
.main-head { display: grid; grid-template-columns: 1fr auto 1fr; align-items: center; width: 100%; height: 66px; padding: 0 17px; }
.model { justify-self: start; margin-left: 5px; gap: 8px; font-size: 21px; }
.plus { height: 40px; padding: 0 18px; gap: 10px; border-radius: 20px; background: #f1f1fb; color: #5d5bd0; font-size: 16px; font-weight: 600; }
.account { display: flex; align-items: center; justify-content: flex-end; gap: 32px; }
.avatar { width: 30px; height: 30px; border-radius: 50%; background: #e8c645; color: #fff; font-size: 11px; }
h1 { margin-top: 240px; font-size: 34px; line-height: 44px; }
.composer { display: flex; flex-direction: column; width: 962px; max-width: 90%; height: 132px; margin-top: 41px; padding: 12px 12px 11px 24px; border: 1px solid #d9d9d9; border-radius: 35px; background: #fff; box-shadow: 0 6px 8px rgba(0, 0, 0, .04); }
.composer textarea { flex: 1; min-height: 0; font-size: 18px; }
.composer-actions { display: flex; align-items: center; justify-content: flex-end; gap: 20px; }
.voice { width: 46px; height: 46px; border-radius: 50%; background: #ececec; }

.taskbar { display: grid; grid-template-columns: 1fr auto 1fr; align-items: center; flex: none; height: 60px; border-top: 1px solid #b1bbc7; background: linear-gradient(90deg, #dfeaf6 0, #dfe9f6 18%, #d5e0f5 28%, #d7def1 38%, #d5e0f5 46%, #dadeef 54%, #d5dff3 65%, #dbdcef 76%, #e0eaf6 82%, #dfecf6 100%); color: #1b1b1b; }
.weather { justify-self: start; padding-left: 27px; gap: 11px; text-align: left; }
.sun { position: relative; width: 26px; height: 26px; border-radius: 50%; background: linear-gradient(160deg, #eebb3d, #f3670c); }
.sun b { position: absolute; left: 12px; top: -11px; width: 20px; height: 20px; border-radius: 50%; background: #c42b1c; color: #fff; font-weight: 400; text-align: center; }
.weather-text { display: flex; flex-direction: column; padding-bottom: 2px; }
.weather-text small { font-size: 14px; color: #5b6066; }
.dock { display: flex; align-items: center; gap: 7px; padding-left: 2px; }
.app { position: relative; width: 48px; height: 48px; border-radius: 6px; }
.search { display: flex; align-items: center; width: 274px; height: 40px; padding: 0 14px; gap: 13px; border: 1px solid #c8d0e3; border-bottom-color: #aab5cc; border-radius: 20px; background: #f2f5fd; }
.search input { flex: 1; min-width: 0; font-size: 16px; }
.search input::placeholder { color: #5f6165; opacity: 1; }
.run::after { content: ""; position: absolute; bottom: 0; left: 20px; width: 8px; height: 4px; border-radius: 2px; background: #858a95; }
.active { background: #edf0fa; }
.active::after { left: 14px; width: 20px; background: #0b74d1; }
.badge-dog { position: absolute; left: 25px; top: 3px; }
.tray { display: flex; align-items: center; justify-content: flex-end; padding-right: 26px; }
.tray > button { margin-left: 22px; }
.tray .lang { margin-left: 28px; }
.tray .sys { gap: 10px; margin-left: 24px; }
.tray .clock { flex-direction: column; align-items: flex-end; margin-left: 24px; padding-bottom: 2px; }
.tray .clock + button { margin-left: 10px; }

.exam { position: absolute; left: 168px; top: 160px; width: 802px; border: 1px solid #a9abad; border-radius: 10px; background: #f0f0f0; color: #000; box-shadow: 0 26px 60px rgba(0, 0, 0, .4), 0 0 20px rgba(0, 0, 0, .1); overflow: hidden; }
.exam-bar { display: flex; align-items: center; height: 37px; padding: 0 1px 0 13px; background: linear-gradient(90deg, #eef3fc 60%, #edf3f6); }
.exam-bar h3 { flex: 1; margin-left: 11px; font-size: 14px; }
.exam-bar button { align-self: flex-start; width: 59px; height: 35px; }
.exam-body { display: flex; flex-direction: column; gap: 12px; padding: 11px 10px; }
fieldset { min-width: 0; margin: 0; padding: 14px 13px 11px; border: 1px solid #dcdcdc; }
legend { height: 20px; margin-left: -7px; padding: 0 1px; }
.config { display: grid; grid-template-columns: 136px 245px; row-gap: 7px; align-items: center; padding-top: 12px; }
.config input { height: 24px; padding-left: 2px; border: 1px solid #fbfbfb; color: #6d6d6d; }
.actions { display: flex; justify-content: center; gap: 12px; }
.actions button { height: 28px; padding: 1px 3px 0; border: 1px solid #d0d0d0; border-bottom-color: #b9b9b9; border-radius: 4px; background: #fdfdfd; }
.actions .off { padding: 0 2px; border-color: #ececec; background: #f4f4f4; color: #838383; }
.off span { height: 24px; padding: 1px; border: 1px dotted #000; }
.status p { text-align: center; }
.journal { display: flex; padding: 11px 11px 9px; }
.journal legend { margin-left: -5px; }
.journal textarea { flex: 1; height: 230px; padding: 1px 2px; border: solid #a0a0a0; border-width: 1px 0 0 1px; background: #fff; font: 17px/22px "Liberation Mono", monospace; white-space: pre; overflow: hidden; }
.log-scroll { display: flex; flex-direction: column; align-items: center; justify-content: space-between; width: 20px; padding: 6px 0 7px; }
.stats { display: flex; gap: 26px; }
</style>
